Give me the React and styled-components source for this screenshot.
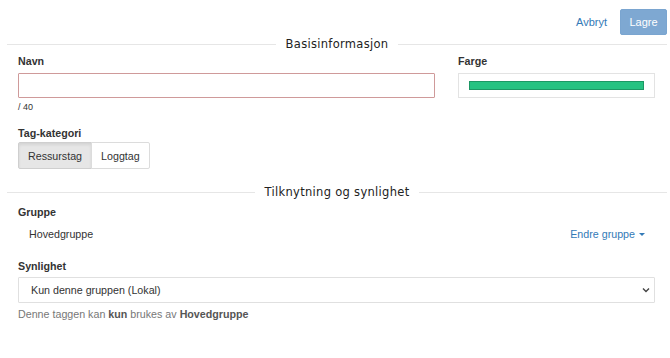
import React from 'react'
import styled, { createGlobalStyle } from 'styled-components'

const Global = createGlobalStyle`
  html, body { margin: 0; padding: 0; background: #fff; }
  body { font-family: "Liberation Sans", Arial, sans-serif; color: #333; font-size: 10.7px; }
`

const Page = styled.div`
  padding: 9px 3px 0 7px;
  width: 660px;
`

const Actions = styled.div`
  display: flex;
  justify-content: flex-end;
  align-items: center;
  gap: 13px;
  height: 26px;
`

const LinkButton = styled.button`
  border: 0;
  background: none;
  padding: 0;
  font: inherit;
  font-size: 11px;
  color: #337ab7;
  cursor: pointer;
`

const PrimaryButton = styled.button`
  height: 26px;
  width: 47px;
  border: 1px solid #7aa5d0;
  border-radius: 2px;
  background: #7ea8d2;
  color: #fff;
  font: inherit;
  font-size: 11px;
  padding: 0;
`

const Divider = styled.div`
  display: flex;
  align-items: center;
  margin-top: ${p => p.$top || 0}px;
  &::before, &::after {
    content: '';
    flex: 1;
    height: 1px;
    background: #e6e6e6;
  }
  span {
    padding: 0 10px;
    font-family: "DejaVu Sans", "Liberation Sans", sans-serif;
    font-size: 11.5px;
    letter-spacing: 0.3px;
    color: #222;
    line-height: 14px;
  }
`

const Body = styled.div`
  padding: 0 12px 0 11px;
`

const Row = styled.div`
  display: grid;
  grid-template-columns: 417px 197px;
  column-gap: 23px;
`

const Label = styled.div`
  font-weight: bold;
  color: #333;
  line-height: 14px;
  margin-top: ${p => p.$top || 0}px;
  margin-bottom: ${p => p.$bottom || 6}px;
`

const TextInput = styled.input`
  display: block;
  box-sizing: border-box;
  width: 100%;
  height: 25px;
  border: 1px solid #cf9a9a;
  border-radius: 1px;
  outline: none;
`

const Counter = styled.div`
  font-size: 9px;
  color: #333;
  margin-top: 4px;
  line-height: 10px;
`

const ColorBox = styled.div`
  box-sizing: border-box;
  height: 25px;
  border: 1px solid #e3e3e3;
  padding: 7px 10px;
`

const Swatch = styled.div`
  height: 9px;
  background: ${p => p.$color};
  box-shadow: inset 0 0 0 1px rgba(0,0,0,0.22);
`

const Group = styled.div`
  display: inline-flex;
`

const Toggle = styled.button`
  height: 27px;
  padding: 0 ${p => p.$pad}px;
  font: inherit;
  color: #333;
  background: ${p => (p.$active ? '#e6e6e6' : '#fff')};
  border: 1px solid ${p => (p.$active ? '#cfcfcf' : '#dcdcdc')};
  box-shadow: ${p => (p.$active ? 'inset 0 2px 3px rgba(0,0,0,0.08)' : 'none')};
  border-radius: ${p => (p.$first ? '2px 0 0 2px' : '0 2px 2px 0')};
  margin-left: ${p => (p.$first ? 0 : -1)}px;
`

const GroupRow = styled.div`
  display: flex;
  justify-content: space-between;
  align-items: center;
  padding: 0 10px 0 11px;
  height: 16px;
`

const Value = styled.span`
  color: #333;
`

const Dropdown = styled.button`
  border: 0;
  background: none;
  padding: 0;
  font: inherit;
  color: #337ab7;
  display: flex;
  align-items: center;
  gap: 4px;
  &::after {
    content: '';
    border-left: 3px solid transparent;
    border-right: 3px solid transparent;
    border-top: 3px solid #337ab7;
  }
`

const SelectBox = styled.div`
  box-sizing: border-box;
  height: 26px;
  border: 1px solid #e0e0e0;
  border-radius: 1px;
  display: flex;
  align-items: center;
  justify-content: space-between;
  padding: 0 4px 0 12px;
  color: #333;
`

const Help = styled.div`
  color: #777;
  margin-top: 5px;
  b { color: #555; }
`

export default function App() {
  return (
    <Page>
      <Global />
      <Actions>
        <LinkButton>Avbryt</LinkButton>
        <PrimaryButton disabled>Lagre</PrimaryButton>
      </Actions>
      <Divider $top={2}><span>Basisinformasjon</span></Divider>
      <Body>
        <Row>
          <div>
            <Label $top={3} $bottom={5}>Navn</Label>
            <TextInput />
            <Counter>/ 40</Counter>
          </div>
          <div>
            <Label $top={3} $bottom={5}>Farge</Label>
            <ColorBox><Swatch $color="#26c281" /></ColorBox>
          </div>
        </Row>
        <Label $top={14} $bottom={2}>Tag-kategori</Label>
        <Group>
          <Toggle $first $active $pad={9}>Ressurstag</Toggle>
          <Toggle $pad={9}>Loggtag</Toggle>
        </Group>
      </Body>
      <Divider $top={16}><span>Tilknytning og synlighet</span></Divider>
      <Body>
        <Label $top={6} $bottom={7}>Gruppe</Label>
        <GroupRow>
          <Value>Hovedgruppe</Value>
          <Dropdown>Endre gruppe</Dropdown>
        </GroupRow>
        <Label $top={17} $bottom={4}>Synlighet</Label>
        <SelectBox>
          <span>Kun denne gruppen (Lokal)</span>
          <svg width="8" height="6" viewBox="0 0 8 6"><path d="M1 1.5 L4 4.5 L7 1.5" fill="none" stroke="#444" strokeWidth="1.4" /></svg>
        </SelectBox>
        <Help>Denne taggen kan <b>kun</b> brukes av <b>Hovedgruppe</b></Help>
      </Body>
    </Page>
  )
}
